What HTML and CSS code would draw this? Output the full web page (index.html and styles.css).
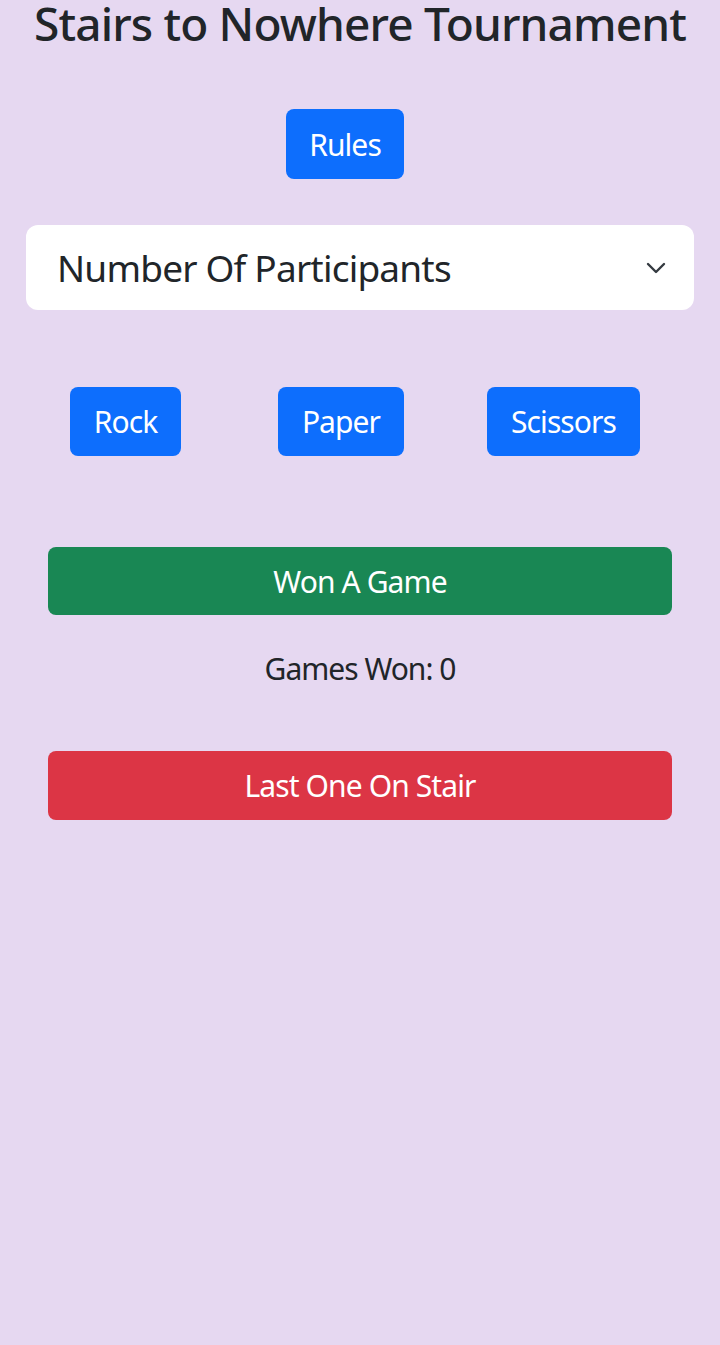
FILE: index.html
```html
<!DOCTYPE html>
<html lang="en">
<head>
<meta charset="utf-8">
<title>Stairs to Nowhere Tournament</title>
<link rel="stylesheet" href="styles.css">
</head>
<body>
<main class="page">
  <h1 class="title">Stairs to Nowhere Tournament</h1>
  <div class="rules-wrap">
    <button class="btn btn-primary btn-rules">Rules</button>
  </div>
  <div class="select">
    <span class="select-label">Number Of Participants</span>
    <svg class="chevron" width="20" height="12" viewBox="0 0 20 12"><polyline points="2,2 10,10 18,2" fill="none" stroke="#343a40" stroke-width="2.4" stroke-linecap="round" stroke-linejoin="round"/></svg>
  </div>
  <div class="choices">
    <button class="btn btn-primary choice choice-rock">Rock</button>
    <button class="btn btn-primary choice choice-paper">Paper</button>
    <button class="btn btn-primary choice choice-scissors">Scissors</button>
  </div>
  <button class="btn btn-wide btn-success">Won A Game</button>
  <p class="games-won">Games Won: 0</p>
  <button class="btn btn-wide btn-danger">Last One On Stair</button>
</main>
</body>
</html>
```

FILE: styles.css
```css
html, body {
  margin: 0;
  padding: 0;
}
body {
  background: #e6d8f1;
  font-family: "Noto Sans", "Open Sans", sans-serif;
  color: #212529;
  min-height: 1345px;
}
.page {
  display: flex;
  flex-direction: column;
}
.title {
  margin: 0;
  font-size: 46px;
  line-height: 46px;
  letter-spacing: -0.85px;
  font-weight: 500;
  text-align: center;
  color: #212529;
}
.btn {
  font-family: "Noto Sans", "Open Sans", sans-serif;
  border: none;
  color: #fff;
  border-radius: 8px;
  cursor: pointer;
  display: inline-flex;
  align-items: center;
  justify-content: center;
  font-size: 30px;
  letter-spacing: -0.9px;
  padding: 0;
}
.btn-primary { background: #0d6efd; }
.btn-success { background: #198754; }
.btn-danger { background: #dc3545; }
.rules-wrap {
  margin-top: 63px;
  display: flex;
  padding-left: 286px;
}
.btn-rules {
  width: 118px;
  height: 70px;
}
.select {
  margin: 46px 26px 0;
  height: 85px;
  background: #fff;
  border-radius: 12px;
  display: flex;
  align-items: center;
  justify-content: space-between;
  padding: 0 28px 0 31px;
}
.select-label {
  font-size: 37px;
  letter-spacing: -0.8px;
}
.chevron {
  display: block;
}
.choices {
  margin-top: 77px;
  display: flex;
  padding-left: 70px;
}
.choice {
  height: 69px;
}
.choice-rock { width: 111px; }
.choice-paper { width: 126px; margin-left: 97px; }
.choice-scissors { width: 153px; margin-left: 83px; }
.btn-wide {
  margin: 91px 48px 0;
  height: 68px;
}
.games-won {
  margin: 0;
  height: 136px;
  line-height: 108px;
  text-align: center;
  font-size: 30px;
  letter-spacing: -1px;
}
.btn-danger {
  margin-top: 0;
  height: 69px;
}
```
